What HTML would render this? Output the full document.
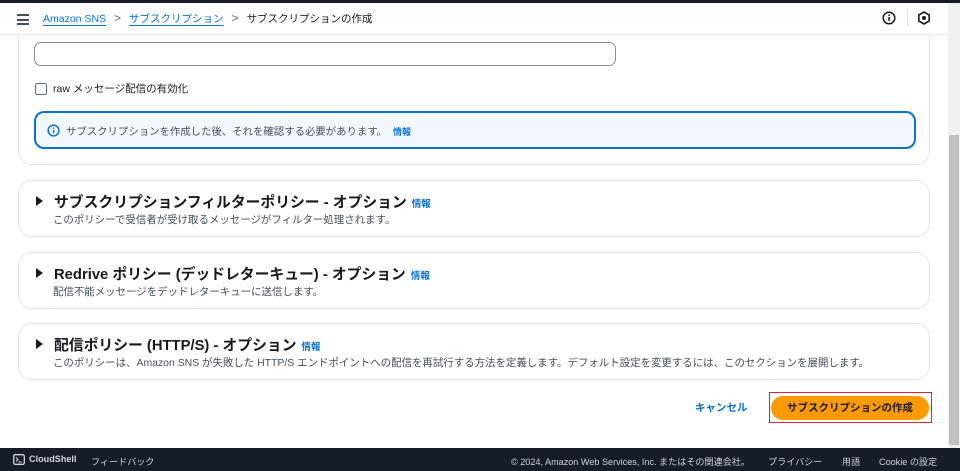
<!DOCTYPE html>
<html><head><meta charset="utf-8"><style>
*{box-sizing:border-box;margin:0;padding:0}
body{width:960px;height:471px;overflow:hidden;background:#fff;font-family:"Liberation Sans","Noto Sans CJK JP",sans-serif;color:#16191f;position:relative}
.topbar{position:absolute;left:0;top:0;width:960px;height:3px;background:#161d26;z-index:5}
.hdr{position:absolute;left:0;top:3px;width:948px;height:32px;background:#fff;border-bottom:1px solid #e9ebed;z-index:2;font-size:11px}
.hdr .burger{position:absolute;left:17px;top:11px;width:12px}
.hdr .burger i{display:block;height:2px;background:#414d5c;margin-bottom:2.5px}
.bc{position:absolute;left:43px;top:8px;white-space:nowrap;font-size:10.5px}
.bc a{color:#0972d3;text-decoration:underline;text-underline-offset:3px}
.bc .sep{color:#5f6b7a;margin:0 8px;font-size:12px}
.scroll{position:absolute;left:948px;top:3px;width:12px;height:445px;background:#f1f1f1}
.thumb{position:absolute;left:949px;top:135px;width:10px;height:310px;background:#c1c1c1}
.card{position:absolute;left:18px;width:912px;border:1px solid #e0e3e6;border-radius:14px;background:#fff}
.h{position:absolute;font-size:14.8px;font-weight:bold;white-space:nowrap}
.h .info{font-size:9.5px;color:#0972d3;font-weight:bold;margin-left:5px}
.tri{position:absolute;left:0px;top:5px;width:0;height:0;border-left:7px solid #16191f;border-top:5px solid transparent;border-bottom:5px solid transparent}
.d{position:absolute;font-size:10.45px;color:#414d5c;white-space:nowrap}
.foot{position:absolute;left:0;top:448px;width:960px;height:23px;background:#161d26;color:#d1d5db;font-size:9.1px}
.foot span{position:absolute;top:6px;white-space:nowrap}
</style></head><body>
<div class="topbar"></div>
<div class="hdr">
 <div class="burger"><i></i><i></i><i></i></div>
 <div class="bc"><a>Amazon SNS</a><span class="sep">&gt;</span><a>サブスクリプション</a><span class="sep">&gt;</span><span>サブスクリプションの作成</span></div>
 <svg style="position:absolute;left:882px;top:8px" width="14" height="14" viewBox="0 0 14 14"><circle cx="7" cy="7" r="5.8" fill="none" stroke="#16191f" stroke-width="1.5"/><rect x="6.3" y="6" width="1.5" height="4" fill="#16191f"/><rect x="6.3" y="3.5" width="1.5" height="1.5" fill="#16191f"/></svg>
 <div style="position:absolute;left:907px;top:6px;width:1px;height:18px;background:#e0e3e6"></div>
 <svg style="position:absolute;left:917px;top:8px" width="14" height="14" viewBox="0 0 14 14"><polygon points="7,1 12.2,4 12.2,10 7,13 1.8,10 1.8,4" fill="none" stroke="#16191f" stroke-width="1.6"/><circle cx="7" cy="7" r="2" fill="#16191f"/></svg>
</div>
<div class="scroll"></div><div class="thumb"></div>

<div class="card" style="top:-20px;height:185px;border-top:none">
 <div style="position:absolute;left:15px;top:62px;width:582px;height:24px;border:1px solid #8c8c94;border-radius:7px"></div>
 <div style="position:absolute;left:16px;top:103px;width:12px;height:12px;border:1.5px solid #5f6b7a;border-radius:2px"></div>
 <div style="position:absolute;left:34px;top:101px;font-size:10.5px">raw メッセージ配信の有効化</div>
 <div style="position:absolute;left:15px;top:131px;width:882px;height:38px;border:2px solid #0972d3;border-radius:10px;background:#f2f8fd">
  <svg style="position:absolute;left:11px;top:11px" width="13" height="13" viewBox="0 0 14 14"><circle cx="7" cy="7" r="5.8" fill="none" stroke="#0972d3" stroke-width="1.6"/><rect x="6.3" y="6" width="1.5" height="4" fill="#0972d3"/><rect x="6.3" y="3.5" width="1.5" height="1.5" fill="#0972d3"/></svg>
  <div style="position:absolute;left:30px;top:10px;font-size:10.4px;color:#414d5c;white-space:nowrap">サブスクリプションを作成した後、それを確認する必要があります。 <b style="color:#0972d3;font-size:9px;margin-left:3px">情報</b></div>
 </div>
</div>

<div class="card" style="top:180px;height:57px">
 <div class="h" style="top:10px;left:17px"><span class="tri"></span><span style="margin-left:18px">サブスクリプションフィルターポリシー - オプション</span><span class="info">情報</span></div>
 <div class="d" style="top:31px;left:34px">このポリシーで受信者が受け取るメッセージがフィルター処理されます。</div>
</div>
<div class="card" style="top:252px;height:57px">
 <div class="h" style="top:10px;left:17px"><span class="tri"></span><span style="margin-left:18px">Redrive ポリシー (デッドレターキュー) - オプション</span><span class="info">情報</span></div>
 <div class="d" style="top:31px;left:34px">配信不能メッセージをデッドレターキューに送信します。</div>
</div>
<div class="card" style="top:323px;height:57px">
 <div class="h" style="top:10px;left:17px"><span class="tri"></span><span style="margin-left:18px">配信ポリシー (HTTP/S) - オプション</span><span class="info">情報</span></div>
 <div class="d" style="top:31px;left:34px">このポリシーは、Amazon SNS が失敗した HTTP/S エンドポイントへの配信を再試行する方法を定義します。デフォルト設定を変更するには、このセクションを展開します。</div>
</div>

<div style="position:absolute;left:695px;top:400px;font-size:10.5px;font-weight:bold;color:#0972d3">キャンセル</div>
<div style="position:absolute;left:769px;top:392px;width:163px;height:31px;border:1px solid #e0202a"></div>
<div style="position:absolute;left:771px;top:396px;width:158px;height:24px;border-radius:12px;background:#ff9900;font-size:10.5px;font-weight:bold;text-align:center;line-height:24px;color:#16191f">サブスクリプションの作成</div>

<div class="foot">
 <svg style="position:absolute;left:13px;top:6px" width="12" height="11" viewBox="0 0 12 11"><rect x="0.7" y="0.7" width="10.6" height="9.6" rx="1.5" fill="none" stroke="#d1d5db" stroke-width="1.3"/><path d="M3 3.5 L5 5.5 L3 7.5 M5.5 8 H8.5" fill="none" stroke="#d1d5db" stroke-width="1.2"/></svg>
 <span style="left:29px;font-weight:bold">CloudShell</span>
 <span style="left:91px">フィードバック</span>
 <span style="left:511px">© 2024, Amazon Web Services, Inc. またはその関連会社。</span>
 <span style="left:768px">プライバシー</span>
 <span style="left:842px">用語</span>
 <span style="left:879px">Cookie の設定</span>
</div>
</body></html>
